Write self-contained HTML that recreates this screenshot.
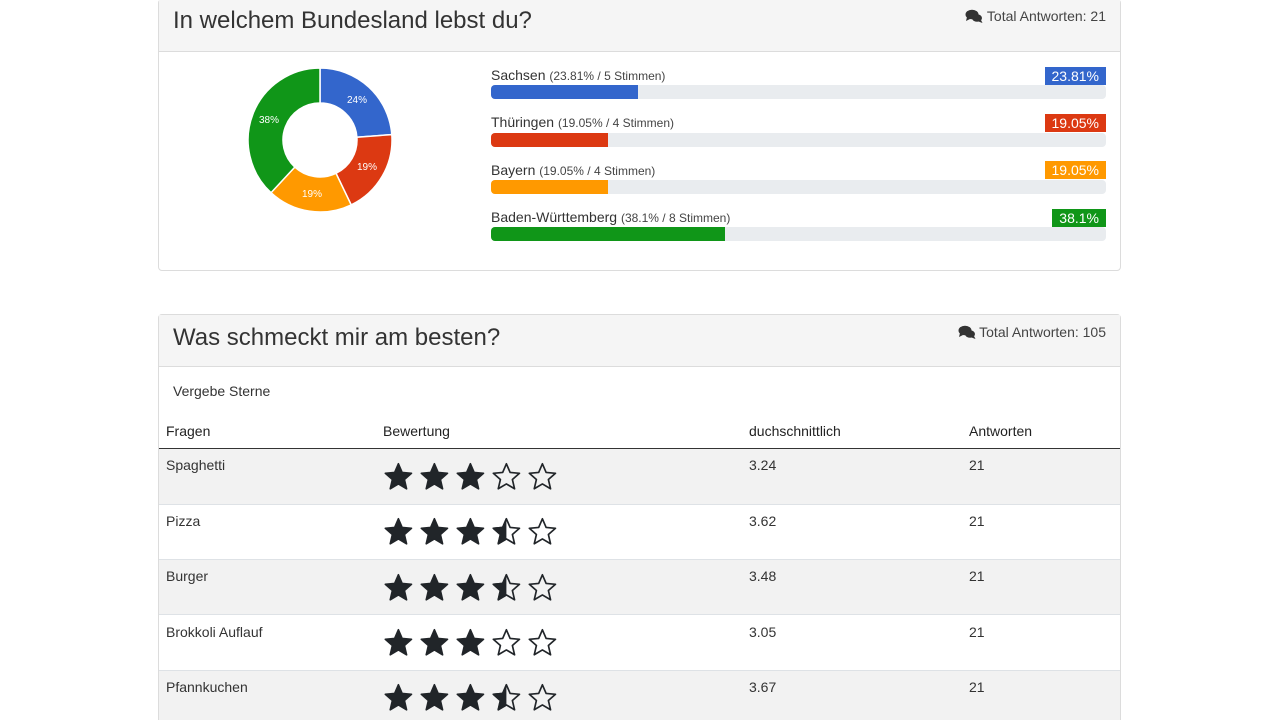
<!DOCTYPE html>
<html><head><meta charset="utf-8"><style>
*{box-sizing:border-box}
html,body{overflow:hidden}
body{margin:0;width:1280px;height:720px;overflow:hidden;background:#fff;font-family:"Liberation Sans",sans-serif;color:#333;position:relative}
.a{position:absolute}
.card{position:absolute;left:158px;width:963px;border:1px solid #dcdcdc;border-radius:4px;background:#fff}
.hd{position:absolute;left:0;top:0;right:0;height:52px;background:#f5f5f5;border-bottom:1px solid #dcdcdc}
.t{position:absolute;left:14px;font-size:24px;color:#333;font-weight:300}
.tot{position:absolute;right:14px;font-size:14px;color:#444}
.lbl{font-size:14px;color:#333}
.lbl small{font-size:12px;color:#444}
.bar{position:absolute;left:491px;width:615px;height:14px;background:#e9ecef;border-radius:4px;overflow:hidden}
.badge{position:absolute;right:174px;height:18px;color:#fff;font-size:14px;padding:0 7px;line-height:18px}
.tx{font-size:14px;color:#333}
.row{position:absolute;left:159px;width:961px;height:55px;border-top:1px solid #dee2e6}
</style></head><body>
<svg width="0" height="0" style="position:absolute"><defs>
<path id="st" d="M12 1.5l3.1 7.2 7.8.7-5.9 5.2 1.8 7.7L12 18.3l-6.8 4 1.8-7.7-5.9-5.2 7.8-.7z"/>
<clipPath id="hl"><rect x="0" y="0" width="12" height="24"/></clipPath>
</defs></svg>

<div class="card" style="top:-1px;height:272px">
<div class="hd"></div>
<div class="t" style="top:7px">In welchem Bundesland lebst du?</div>
<div class="tot" style="top:8px"><svg width="18" height="14" viewBox="0 0 18 14" style="vertical-align:-2px"><ellipse cx="7" cy="5.5" rx="6.5" ry="4.8" fill="#333"/><path d="M2 8l-1 4 4-2z" fill="#333"/><ellipse cx="12" cy="9" rx="5" ry="3.8" fill="#333"/><path d="M16 11l1.5 3-4-1.5z" fill="#333"/></svg> Total Antworten: 21</div>
</div>
<svg class="a" style="left:0;top:0" width="1280" height="280">
<g stroke="#fff" stroke-width="1.5">
<path d="M320 68A72 72 0 0 1 391.8 134.6L356.9 137.2A37 37 0 0 0 320 103Z" fill="#3366cc"/>
<path d="M391.8 134.6A72 72 0 0 1 351.2 204.9L336 173.3A37 37 0 0 0 356.9 137.2Z" fill="#dc3912"/>
<path d="M351.2 204.9A72 72 0 0 1 271 192.7L294.8 167.1A37 37 0 0 0 336 173.3Z" fill="#ff9900"/>
<path d="M271 192.7A72 72 0 0 1 320 68L320 103A37 37 0 0 0 294.8 167.1Z" fill="#109618"/>
</g>
<g fill="#fff" font-size="10" font-family="Liberation Sans">
<text x="347" y="103">24%</text><text x="357" y="170">19%</text><text x="302" y="197">19%</text><text x="259" y="123">38%</text>
</g></svg>

<div class="a lbl" style="left:491px;top:67px">Sachsen <small>(23.81% / 5 Stimmen)</small></div>
<div class="badge" style="top:67px;background:#3366cc">23.81%</div>
<div class="bar" style="top:85px"><div style="width:147px;height:14px;background:#3366cc"></div></div>
<div class="a lbl" style="left:491px;top:114px">Thüringen <small>(19.05% / 4 Stimmen)</small></div>
<div class="badge" style="top:114px;background:#dc3912">19.05%</div>
<div class="bar" style="top:133px"><div style="width:117px;height:14px;background:#dc3912"></div></div>
<div class="a lbl" style="left:491px;top:162px">Bayern <small>(19.05% / 4 Stimmen)</small></div>
<div class="badge" style="top:161px;background:#ff9900">19.05%</div>
<div class="bar" style="top:180px"><div style="width:117px;height:14px;background:#ff9900"></div></div>
<div class="a lbl" style="left:491px;top:209px">Baden-Württemberg <small>(38.1% / 8 Stimmen)</small></div>
<div class="badge" style="top:209px;background:#109618">38.1%</div>
<div class="bar" style="top:227px"><div style="width:234px;height:14px;background:#109618"></div></div>

<div class="card" style="top:314px;height:420px">
<div class="hd"></div>
<div class="t" style="top:9px">Was schmeckt mir am besten?</div>
<div class="tot" style="top:9px"><svg width="18" height="14" viewBox="0 0 18 14" style="vertical-align:-2px"><ellipse cx="7" cy="5.5" rx="6.5" ry="4.8" fill="#333"/><path d="M2 8l-1 4 4-2z" fill="#333"/><ellipse cx="12" cy="9" rx="5" ry="3.8" fill="#333"/><path d="M16 11l1.5 3-4-1.5z" fill="#333"/></svg> Total Antworten: 105</div>
</div>
<div class="a tx" style="left:173px;top:383px">Vergebe Sterne</div>
<div class="a tx" style="left:166px;top:423px;color:#222">Fragen</div>
<div class="a tx" style="left:383px;top:423px;color:#222">Bewertung</div>
<div class="a tx" style="left:749px;top:423px;color:#222">duchschnittlich</div>
<div class="a tx" style="left:969px;top:423px;color:#222">Antworten</div>
<div class="a" style="left:159px;top:448px;width:961px;height:1px;background:#333"></div>

<div class="row" style="top:449px;background:#f2f2f2;border-top:none"></div>
<div class="row" style="top:504px"></div>
<div class="row" style="top:559px;background:#f2f2f2"></div>
<div class="row" style="top:614px"></div>
<div class="row" style="top:670px;background:#f2f2f2"></div>

<div class="a tx" style="left:166px;top:457px">Spaghetti</div><div class="a tx" style="left:749px;top:457px">3.24</div><div class="a tx" style="left:969px;top:457px">21</div>
<div class="a tx" style="left:166px;top:513px">Pizza</div><div class="a tx" style="left:749px;top:513px">3.62</div><div class="a tx" style="left:969px;top:513px">21</div>
<div class="a tx" style="left:166px;top:568px">Burger</div><div class="a tx" style="left:749px;top:568px">3.48</div><div class="a tx" style="left:969px;top:568px">21</div>
<div class="a tx" style="left:166px;top:624px">Brokkoli Auflauf</div><div class="a tx" style="left:749px;top:624px">3.05</div><div class="a tx" style="left:969px;top:624px">21</div>
<div class="a tx" style="left:166px;top:679px">Pfannkuchen</div><div class="a tx" style="left:749px;top:679px">3.67</div><div class="a tx" style="left:969px;top:679px">21</div>

<svg class="a" style="left:0;top:0" width="1280" height="720">
<g fill="#212529" stroke="#212529" stroke-width="1.4" stroke-linejoin="round">
<g transform="translate(384,462) scale(1.2)"><use href="#st"/><use href="#st" x="30"/><use href="#st" x="60"/><use href="#st" x="90" fill="none"/><use href="#st" x="120" fill="none"/></g>
<g transform="translate(384,517) scale(1.2)"><use href="#st"/><use href="#st" x="30"/><use href="#st" x="60"/><g transform="translate(90,0)"><use href="#st" fill="none"/><use href="#st" clip-path="url(#hl)"/></g><use href="#st" x="120" fill="none"/></g>
<g transform="translate(384,573) scale(1.2)"><use href="#st"/><use href="#st" x="30"/><use href="#st" x="60"/><g transform="translate(90,0)"><use href="#st" fill="none"/><use href="#st" clip-path="url(#hl)"/></g><use href="#st" x="120" fill="none"/></g>
<g transform="translate(384,628) scale(1.2)"><use href="#st"/><use href="#st" x="30"/><use href="#st" x="60"/><use href="#st" x="90" fill="none"/><use href="#st" x="120" fill="none"/></g>
<g transform="translate(384,683) scale(1.2)"><use href="#st"/><use href="#st" x="30"/><use href="#st" x="60"/><g transform="translate(90,0)"><use href="#st" fill="none"/><use href="#st" clip-path="url(#hl)"/></g><use href="#st" x="120" fill="none"/></g>
</g></svg>
</body></html>
